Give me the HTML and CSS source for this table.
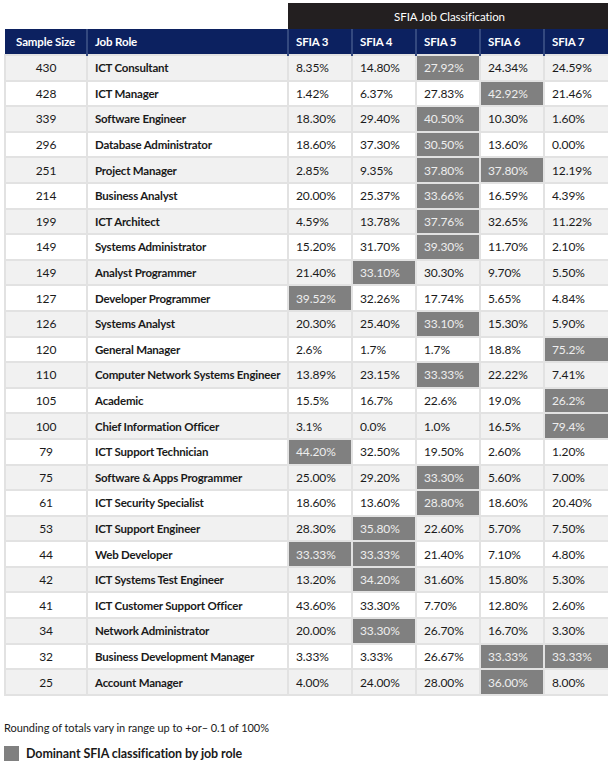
FILE: index.html
```html
<!DOCTYPE html>
<html>
<head>
<meta charset="utf-8">
<link rel="stylesheet" href="styles.css">
</head>
<body>
<div class="page">
<table class="grid">
<colgroup>
<col class="c-size"><col class="c-role"><col class="c-n"><col class="c-n"><col class="c-n"><col class="c-n"><col class="c-last">
</colgroup>
<thead>
<tr class="band"><th class="blank"></th><th class="blank"></th><th colspan="5" class="classif">SFIA Job Classification</th></tr>
<tr class="head"><th class="ctr">Sample Size</th><th>Job Role</th><th>SFIA 3</th><th>SFIA 4</th><th>SFIA 5</th><th>SFIA 6</th><th>SFIA 7</th></tr>
</thead>
<tbody>
<tr><td class="ctr">430</td><td class="role">ICT Consultant</td><td>8.35%</td><td>14.80%</td><td class="dom">27.92%</td><td>24.34%</td><td>24.59%</td></tr>
<tr><td class="ctr">428</td><td class="role">ICT Manager</td><td>1.42%</td><td>6.37%</td><td>27.83%</td><td class="dom">42.92%</td><td>21.46%</td></tr>
<tr><td class="ctr">339</td><td class="role">Software Engineer</td><td>18.30%</td><td>29.40%</td><td class="dom">40.50%</td><td>10.30%</td><td>1.60%</td></tr>
<tr><td class="ctr">296</td><td class="role">Database Administrator</td><td>18.60%</td><td>37.30%</td><td class="dom">30.50%</td><td>13.60%</td><td>0.00%</td></tr>
<tr><td class="ctr">251</td><td class="role">Project Manager</td><td>2.85%</td><td>9.35%</td><td class="dom">37.80%</td><td class="dom">37.80%</td><td>12.19%</td></tr>
<tr><td class="ctr">214</td><td class="role">Business Analyst</td><td>20.00%</td><td>25.37%</td><td class="dom">33.66%</td><td>16.59%</td><td>4.39%</td></tr>
<tr><td class="ctr">199</td><td class="role">ICT Architect</td><td>4.59%</td><td>13.78%</td><td class="dom">37.76%</td><td>32.65%</td><td>11.22%</td></tr>
<tr><td class="ctr">149</td><td class="role">Systems Administrator</td><td>15.20%</td><td>31.70%</td><td class="dom">39.30%</td><td>11.70%</td><td>2.10%</td></tr>
<tr><td class="ctr">149</td><td class="role">Analyst Programmer</td><td>21.40%</td><td class="dom">33.10%</td><td>30.30%</td><td>9.70%</td><td>5.50%</td></tr>
<tr><td class="ctr">127</td><td class="role">Developer Programmer</td><td class="dom">39.52%</td><td>32.26%</td><td>17.74%</td><td>5.65%</td><td>4.84%</td></tr>
<tr><td class="ctr">126</td><td class="role">Systems Analyst</td><td>20.30%</td><td>25.40%</td><td class="dom">33.10%</td><td>15.30%</td><td>5.90%</td></tr>
<tr><td class="ctr">120</td><td class="role">General Manager</td><td>2.6%</td><td>1.7%</td><td>1.7%</td><td>18.8%</td><td class="dom">75.2%</td></tr>
<tr><td class="ctr">110</td><td class="role">Computer Network Systems Engineer</td><td>13.89%</td><td>23.15%</td><td class="dom">33.33%</td><td>22.22%</td><td>7.41%</td></tr>
<tr><td class="ctr">105</td><td class="role">Academic</td><td>15.5%</td><td>16.7%</td><td>22.6%</td><td>19.0%</td><td class="dom">26.2%</td></tr>
<tr><td class="ctr">100</td><td class="role">Chief Information Officer</td><td>3.1%</td><td>0.0%</td><td>1.0%</td><td>16.5%</td><td class="dom">79.4%</td></tr>
<tr><td class="ctr">79</td><td class="role">ICT Support Technician</td><td class="dom">44.20%</td><td>32.50%</td><td>19.50%</td><td>2.60%</td><td>1.20%</td></tr>
<tr><td class="ctr">75</td><td class="role">Software &amp; Apps Programmer</td><td>25.00%</td><td>29.20%</td><td class="dom">33.30%</td><td>5.60%</td><td>7.00%</td></tr>
<tr><td class="ctr">61</td><td class="role">ICT Security Specialist</td><td>18.60%</td><td>13.60%</td><td class="dom">28.80%</td><td>18.60%</td><td>20.40%</td></tr>
<tr><td class="ctr">53</td><td class="role">ICT Support Engineer</td><td>28.30%</td><td class="dom">35.80%</td><td>22.60%</td><td>5.70%</td><td>7.50%</td></tr>
<tr><td class="ctr">44</td><td class="role">Web Developer</td><td class="dom">33.33%</td><td class="dom">33.33%</td><td>21.40%</td><td>7.10%</td><td>4.80%</td></tr>
<tr><td class="ctr">42</td><td class="role">ICT Systems Test Engineer</td><td>13.20%</td><td class="dom">34.20%</td><td>31.60%</td><td>15.80%</td><td>5.30%</td></tr>
<tr><td class="ctr">41</td><td class="role">ICT Customer Support Officer</td><td>43.60%</td><td>33.30%</td><td>7.70%</td><td>12.80%</td><td>2.60%</td></tr>
<tr><td class="ctr">34</td><td class="role">Network Administrator</td><td>20.00%</td><td class="dom">33.30%</td><td>26.70%</td><td>16.70%</td><td>3.30%</td></tr>
<tr><td class="ctr">32</td><td class="role">Business Development Manager</td><td>3.33%</td><td>3.33%</td><td>26.67%</td><td class="dom">33.33%</td><td class="dom">33.33%</td></tr>
<tr><td class="ctr">25</td><td class="role">Account Manager</td><td>4.00%</td><td>24.00%</td><td>28.00%</td><td class="dom">36.00%</td><td>8.00%</td></tr>
</tbody>
</table>
<p class="note">Rounding of totals vary in range up to +or– 0.1 of 100%</p>
<div class="legend"><span class="swatch"></span><span class="legend-text">Dominant SFIA classification by job role</span></div>
</div>
</body>
</html>
```

FILE: styles.css
```css
html, body {
  margin: 0;
  padding: 0;
  background: #ffffff;
}

.page {
  padding: 3px 0 0 4px;
  font-family: Lato, "Open Sans", Arial, sans-serif;
  color: #1a1a1a;
}

.grid {
  border-collapse: collapse;
  table-layout: fixed;
  width: 606px;
  font-size: 12px;
}

.c-size { width: 82px; }
.c-role { width: 201px; }
.c-n { width: 64px; }
.c-last { width: 67px; }

.grid th,
.grid td {
  padding: 0 0 0 7px;
  text-align: left;
  white-space: nowrap;
  overflow: hidden;
}

.band th {
  height: 26px;
  font-weight: normal;
  font-size: 11.5px;
  letter-spacing: -0.1px;
}

.band .blank {
  background: transparent;
}

.band .classif {
  background: #231f20;
  color: #ffffff;
  text-align: center;
  padding: 0;
}

.head th {
  height: 25px;
  background: #0c2160;
  color: #ffffff;
  font-weight: bold;
  font-size: 11.5px;
  letter-spacing: -0.15px;
  border-left: 2px solid #34497f;
}

.head th:first-child {
  border-left: none;
}

.grid .ctr {
  text-align: center;
  padding: 0;
}

.grid tbody td {
  height: 23.6px;
  border: 2px solid #e2e2e2;
  background: #ffffff;
  letter-spacing: -0.1px;
}

.grid tbody tr:nth-child(odd) td {
  background: #f1f1f1;
}

.grid tbody td.role {
  font-weight: bold;
  font-size: 11.5px;
  letter-spacing: -0.2px;
}

.grid tbody td.dom {
  background: #808080;
  color: #eeeeee;
}

.grid tbody tr:nth-child(odd) td.dom {
  background: #808080;
}

.note {
  margin: 25px 0 0 0;
  font-size: 11px;
  letter-spacing: -0.05px;
  color: #1a1a1a;
}

.legend {
  display: flex;
  align-items: center;
  gap: 7px;
  margin-top: 12px;
}

.swatch {
  width: 15px;
  height: 15px;
  background: #808080;
}

.legend-text {
  font-weight: bold;
  font-size: 12.5px;
  letter-spacing: -0.1px;
}
```
